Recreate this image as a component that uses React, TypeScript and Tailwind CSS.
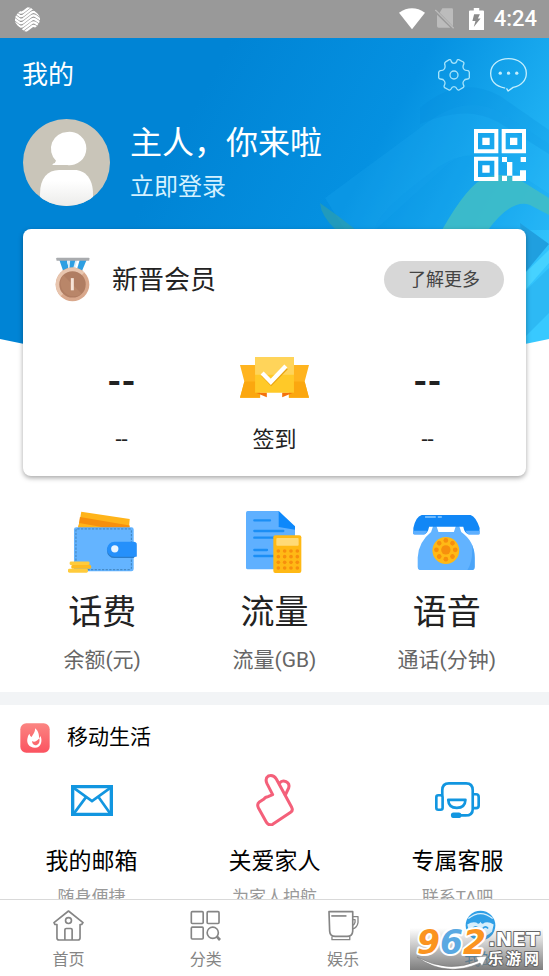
import React, { useState } from 'react';

type IconProps = { className?: string };

const waves = [-33, -22, -11, 0, 11, 22, 33];

const OperatorLogo: React.FC<IconProps> = ({ className }) => (
  <svg className={className} viewBox="0 0 78 78" fill="none" stroke="currentColor">
    <defs>
      <clipPath id="operator">
        <path d="M28 3Q39-2 50 3L70 20Q79 29 78 40Q77 52 68 60L50 75Q39 80 28 75L8 58Q-1 50 0 38Q1 26 10 18Z" />
      </clipPath>
    </defs>
    <g clipPath="url(#operator)" strokeWidth="7">
      {waves.map((dy) => (
        <path key={dy} d="M-4 32L14 45Q20 48 26 44L52 24Q58 20 64 24L82 37" transform={`translate(0 ${dy + 4})`} />
      ))}
    </g>
  </svg>
);

const WifiIcon: React.FC<IconProps> = ({ className }) => (
  <svg className={className} viewBox="0 0 78 64" fill="currentColor">
    <path d="M0 14Q39-12 78 14L39 64Z" />
  </svg>
);

const NoSimIcon: React.FC<IconProps> = ({ className }) => (
  <svg className={className} viewBox="0 0 60 64">
    <path d="M22 1H50Q54 1 54 5V55L14 14Z" fill="currentColor" />
    <path d="M6 20V54Q6 59 11 59H46Z" fill="currentColor" />
    <path d="M1 6L56 61" stroke="currentColor" strokeWidth="4" />
  </svg>
);

const BatteryIcon: React.FC<IconProps> = ({ className }) => (
  <svg className={className} viewBox="0 0 44 66">
    <path d="M14 0H30V7H41Q44 7 44 10V63Q44 66 41 66H3Q0 66 0 63V10Q0 7 3 7H14Z" fill="currentColor" />
    <path d="M15 18H32L26 31H34L14 56L19 38H10Z" fill="#8b8b8b" />
  </svg>
);

const GearIcon: React.FC<IconProps> = ({ className }) => (
  <svg className={className} viewBox="0 0 96 96" fill="none" stroke="currentColor" strokeWidth="4" strokeLinejoin="round">
    <path d="M24 8L34 2Q38 1 39 5Q41 13 48 13Q55 13 57 5Q58 1 62 2L76 9Q79 12 77 16Q73 24 77 30Q80 35 90 35Q93 36 94 40V56Q93 60 89 60Q80 60 77 66Q73 72 77 79Q79 83 75 86L63 93Q59 94 57 90Q54 83 48 83Q42 83 39 90Q37 94 33 93L20 86Q17 83 19 79Q23 72 19 66Q16 60 7 60Q3 60 2 56V40Q3 36 7 35Q16 35 19 30Q23 24 20 16Q19 11 24 8Z" />
    <circle cx="48" cy="48" r="12" />
  </svg>
);

const ChatIcon: React.FC<IconProps> = ({ className }) => (
  <svg className={className} viewBox="0 0 112 102">
    <path d="M46 91C10 84 2 62 2 46C2 18 28 2 56 2S110 18 110 46C110 66 96 84 70 89L55 100L50 92" fill="none" stroke="currentColor" strokeWidth="4" strokeLinejoin="round" />
    <circle cx="31" cy="46" r="5" fill="currentColor" />
    <circle cx="56" cy="46" r="5" fill="currentColor" />
    <circle cx="81" cy="46" r="5" fill="currentColor" />
  </svg>
);

const QrIcon: React.FC<IconProps> = ({ className }) => (
  <svg className={className} viewBox="0 0 156 156" fill="currentColor">
    <path fillRule="evenodd" d="M0 0H73V73H0ZM12 12V61H61V12Z" />
    <path fillRule="evenodd" d="M83 0H156V73H83ZM95 12V61H144V12Z" />
    <path fillRule="evenodd" d="M0 83H73V156H0ZM12 95V144H61V95Z" />
    <path d="M25 26H47V48H25ZM108 26H130V48H108ZM25 109H47V131H25Z" />
    <path d="M84 84H99V99H84ZM99 99H115V140H99ZM84 140H99V156H84ZM140 84H156V99H140ZM156 124V156H115V140H138V124Z" />
  </svg>
);

const Avatar: React.FC<IconProps> = ({ className }) => (
  <svg className={className} viewBox="0 0 261 261">
    <defs>
      <linearGradient id="bust" x1="0" y1="0" x2="0" y2="1">
        <stop offset="0.3" stopColor="#ffffff" />
        <stop offset="1" stopColor="#ececea" />
      </linearGradient>
      <clipPath id="avatar">
        <circle cx="130.500" cy="130.500" r="130.500" />
      </clipPath>
    </defs>
    <g clipPath="url(#avatar)">
      <rect width="261" height="261" fill="#c9c5b9" />
      <path d="M133 39A50 50 0 1 1 133 138H90Q86 136 90 134Q97 133 99 125A50 50 0 0 1 133 39Z" fill="#fff" />
      <path d="M51 261V224C51 178 74 153 108 153H155C187 153 210 180 210 224V261Z" fill="url(#bust)" />
    </g>
  </svg>
);

const HeroArt: React.FC<IconProps> = ({ className }) => (
  <svg className={className} viewBox="0 0 549 340" preserveAspectRatio="none">
    <defs>
      <linearGradient id="sky" gradientUnits="userSpaceOnUse" x1="210" y1="40" x2="560" y2="230">
        <stop offset="0" stopColor="#0084d5" />
        <stop offset="0.45" stopColor="#0591e1" />
        <stop offset="0.8" stopColor="#1fb1f3" />
        <stop offset="1" stopColor="#38c9ff" />
      </linearGradient>
      <clipPath id="arc">
        <path d="M0 0H549V301Q274 361 0 301Z" />
      </clipPath>
    </defs>
    <g clipPath="url(#arc)">
      <rect width="549" height="340" fill="url(#sky)" />
      <path d="M325 160L428 84Q466 56 500 74L549 106V156L510 130Q472 106 448 126L375 192H345Z" fill="#1ba6ee" opacity="0.25" />
      <path d="M420 70Q460 36 500 58L549 92V116L498 84Q466 66 420 86Z" fill="#0086d8" opacity="0.18" />
      <path d="M375 192Q376 174 440 128Q474 106 510 130L549 156V192Z" fill="#0b98e6" opacity="0.25" />
      <path d="M320 165L338 178L356 192H336Q321 178 320 165Z" fill="#2d9eac" opacity="0.7" />
      <path d="M442 192Q468 146 486 139Q504 134 520 142L549 160V177L530 167Q512 160 488 192Z" fill="#3fbcc6" opacity="0.9" />
      <path d="M520 185L549 206L524 236Z" fill="#209fdf" />
      <path d="M520 240L549 212V225L520 258Z" fill="#46d2ff" />
      <path d="M520 258L549 230V275L520 304Z" fill="#2db9f4" />
    </g>
  </svg>
);

const MedalIcon: React.FC<IconProps> = ({ className }) => (
  <svg className={className} viewBox="0 0 106 135">
    <path d="M13 8H36L44 46H26Z" fill="#2e9fe2" />
    <path d="M36 8H68L56 46H44Z" fill="#fff" />
    <path d="M36 8H68L58 40H42Z" fill="#d8eefa" />
    <path d="M46 8H62L54 38H44Z" fill="#2e9fe2" />
    <path d="M75 8H96L80 46H64Z" fill="#2e9fe2" />
    <rect x="4" y="2" width="100" height="9" rx="2" fill="#a9abae" />
    <circle cx="53" cy="83" r="51" fill="#d9a88c" />
    <path d="M17 47A51 51 0 0 0 17 119L89 47A51 51 0 0 0 17 47Z" fill="#e8c5ae" />
    <circle cx="53" cy="83" r="40" fill="#b07d62" />
    <path d="M25 55A40 40 0 0 0 81 111Z" fill="#b98669" />
    <rect x="48" y="64" width="9" height="37" fill="#f6e3d7" />
  </svg>
);

const RibbonIcon: React.FC<IconProps> = ({ className }) => (
  <svg className={className} viewBox="0 0 206 124">
    <path d="M0 24H60V122H0L13 73Z" fill="#ffb41f" />
    <path d="M13 73L0 122H60V73Z" fill="#fba70f" />
    <path d="M206 24H146V122H206L193 73Z" fill="#ffb41f" />
    <path d="M193 73L206 122H146V73Z" fill="#fba70f" />
    <path d="M46 106H80V120Z" fill="#f4720b" />
    <path d="M160 106H126V120Z" fill="#f4720b" />
    <path d="M45 0H161V107H45Z" fill="#ffc928" />
    <path d="M45 0H161V53H45Z" fill="#ffd45a" />
    <path d="M68 52L93 78L138 32" fill="none" stroke="#e9a512" strokeWidth="13" />
    <path d="M66 48L92 74L137 27" fill="none" stroke="#fff" strokeWidth="13" />
  </svg>
);

const WalletIcon: React.FC<IconProps> = ({ className }) => (
  <svg className={className} viewBox="0 0 208 188">
    <path d="M40 2L186 24L183 60H30Z" fill="#ffb41a" />
    <path d="M36 18L186 44V60H30Z" fill="#f78f0d" />
    <path d="M34 36L110 50H30Z" fill="#ffb41a" />
    <rect x="18" y="49" width="180" height="133" rx="7" fill="#64b4ff" />
    <rect x="24" y="54" width="167" height="123" rx="4" fill="none" stroke="#3577ac" strokeWidth="2.500" strokeDasharray="7 4" />
    <path d="M140 97H206V136H204L198 142H140A22 22 0 0 1 140 97Z" fill="#2b7cc9" />
    <path d="M140 93H198Q207 93 207 101V138H140A22 22 0 0 1 140 93Z" fill="#2590fb" />
    <circle cx="141" cy="114" r="11" fill="#eaf5ff" />
    <rect x="5" y="152" width="60" height="11" rx="4" fill="#ffcb3c" />
    <rect x="10" y="163" width="60" height="11" rx="4" fill="#fdbb21" />
    <rect x="0" y="174" width="60" height="12" rx="4" fill="#ffcb3c" />
  </svg>
);

const keys = [0, 1, 2, 3];

const DataIcon: React.FC<IconProps> = ({ className }) => (
  <svg className={className} viewBox="0 0 168 188">
    <path d="M5 0H98L147 50V175H5Q0 175 0 170V5Q0 0 5 0Z" fill="#5fb0ff" />
    <path d="M98 0L147 46V56L98 48Z" fill="#0d88fb" />
    <path d="M25 28H72M25 60H112M25 80H84M25 117H63M25 135H84" stroke="#1b8ef5" strokeWidth="7" strokeLinecap="round" />
    <rect x="82" y="73" width="84" height="113" rx="6" fill="#ffb915" />
    <rect x="91" y="81" width="67" height="23" rx="3" fill="#ffda76" />
    {keys.map((row) =>
      keys.map((col) => (
        <circle key={`${row}-${col}`} cx={97 + col * 19} cy={120 + row * 17} r="5.500" fill="#f78f0d" />
      ))
    )}
  </svg>
);

const dialHoles = [0, 45, 90, 135, 180, 225, 270, 315];

const PhoneIcon: React.FC<IconProps> = ({ className }) => (
  <svg className={className} viewBox="0 0 200 170">
    <path d="M54 54L60 36H70L76 54H122L128 36H138L144 54Q184 82 184 130V158Q184 168 174 168H24Q14 168 14 158V130Q16 84 54 54Z" fill="#62b3ff" />
    <path d="M176 92Q184 108 184 130V158Q184 168 174 168H162Q180 140 176 92Z" fill="#4ba4f8" />
    <path d="M26 3H172Q188 8 199 42L198 60H168Q154 60 150 38H48Q44 60 32 60H1V42Q8 8 26 3Z" fill="#1187f6" />
    <path d="M1 50H42Q38 62 32 62H5Q1 62 1 58ZM199 50H157Q162 62 168 62H195Q199 62 199 58Z" fill="#5dafff" />
    <path d="M36 9H68M74 9H86" stroke="#8fcbff" strokeWidth="4" />
    <circle cx="98" cy="109" r="40" fill="#ffb915" />
    <circle cx="98" cy="107" r="14" fill="#f78f0d" />
    {dialHoles.map((angle) => (
      <circle key={angle} cx="98" cy="79" r="7" fill="#f78f0d" transform={`rotate(${angle} 98 107)`} />
    ))}
  </svg>
);

const HotIcon: React.FC<IconProps> = ({ className }) => (
  <svg className={className} viewBox="0 0 90 90">
    <defs>
      <linearGradient id="hot" x1="0" y1="0" x2="0" y2="1">
        <stop offset="0" stopColor="#fb8582" />
        <stop offset="1" stopColor="#fb5360" />
      </linearGradient>
    </defs>
    <rect x="1" y="1" width="88" height="88" rx="18" fill="url(#hot)" />
    <path d="M45 16C58 26 56 38 58 46Q61 42 61 38C68 50 65 74 45 74C26 74 20 60 22 48Q23 38 28 32Q30 40 35 42C40 32 46 28 45 16Z" fill="#fff" />
    <path d="M36 54C42 59 50 56 58 46C61 60 54 67 46 67Q37 65 36 54Z" fill="#fb6a6f" />
  </svg>
);

const MailIcon: React.FC<IconProps> = ({ className }) => (
  <svg className={className} viewBox="0 0 126 93" fill="none" stroke="currentColor">
    <path d="M5 5H121V88H5Z" strokeWidth="10" />
    <path d="M6 7L63 48L120 7M44 38L9 85M84 38L117 85" strokeWidth="8" />
  </svg>
);

const CareIcon: React.FC<IconProps> = ({ className }) => (
  <svg className={className} viewBox="0 0 114 158" fill="none" stroke="currentColor" strokeWidth="9" strokeLinejoin="round" strokeLinecap="round">
    <path d="M24 75Q28 68 36 68L50 62L33 29Q26 13 37 6Q52 1 61 15L107 100Q112 110 104 115L50 151Q39 156 32 146L7 101Q2 90 10 84Z" />
    <path d="M71 27Q78 18 90 23Q102 29 98 42L88 63" />
  </svg>
);

const ServiceIcon: React.FC<IconProps> = ({ className }) => (
  <svg className={className} viewBox="0 0 136 108" fill="none" stroke="currentColor" strokeWidth="8" strokeLinejoin="round">
    <path d="M22 41V25Q22 4 42 4H94Q114 4 114 25V82Q114 101 92 101H76" />
    <rect x="4" y="40" width="19" height="44" rx="6" />
    <path d="M114 37H124Q132 37 132 45V72Q132 79 124 79H114" />
    <path d="M40 54H92Q91 78 66 78Q41 78 40 54Z" />
    <rect x="52" y="96" width="24" height="9" rx="4" fill="currentColor" />
  </svg>
);

const HomeIcon: React.FC<IconProps> = ({ className }) => (
  <svg className={className} viewBox="0 0 94 94" fill="none" stroke="currentColor" strokeWidth="5" strokeLinejoin="round">
    <path d="M47 3L91 38L87 44H82V85Q82 91 76 91H18Q12 91 12 85V44H6L3 38Z" />
    <circle cx="47" cy="32" r="9" />
    <path d="M36 91V60Q36 56 40 56H54Q58 56 58 60V91" />
  </svg>
);

const CategoryIcon: React.FC<IconProps> = ({ className }) => (
  <svg className={className} viewBox="0 0 94 94" fill="none" stroke="currentColor" strokeWidth="5">
    <rect x="4" y="5" width="36" height="36" rx="3" />
    <rect x="52" y="5" width="36" height="36" rx="3" />
    <rect x="4" y="52" width="36" height="36" rx="3" />
    <circle cx="69" cy="69" r="17" />
    <path d="M81 80L91 91" strokeWidth="8" />
  </svg>
);

const CupIcon: React.FC<IconProps> = ({ className }) => (
  <svg className={className} viewBox="0 0 94 94" fill="none" stroke="currentColor" strokeWidth="5" strokeLinejoin="round">
    <path d="M3 5H75V64Q74 80 58 80H22Q6 80 5 64Z" />
    <path d="M10 18H56" />
    <path d="M74 20H91V38Q88 54 75 57M75 29H82V37Q80 44 75 46" strokeWidth="4" />
    <path d="M12 80V90H66V80" strokeWidth="4" />
  </svg>
);

const MineIcon: React.FC<IconProps> = ({ className }) => (
  <svg className={className} viewBox="0 0 94 94" fill="none">
    <circle cx="47" cy="47" r="45" fill="#2f9fe6" />
    <path d="M10 26Q47-4 84 26" stroke="#d8effc" strokeWidth="4" />
    <path d="M7 44Q22 34 34 38Q44 46 47 36Q50 46 60 38Q72 34 87 44L82 66Q64 82 47 82T12 66Z" fill="#d8effc" />
    <path d="M24 56Q32 46 40 56M54 56Q62 46 70 56M34 70Q47 76 60 70" stroke="#2f9fe6" strokeWidth="5" />
  </svg>
);

const SiteBadge: React.FC<IconProps> = ({ className }) => (
  <svg className={className} viewBox="0 0 134 46" role="img" aria-label="962.NET 乐游网">
    <defs>
      <linearGradient id="plate" x1="0" y1="0" x2="0" y2="1">
        <stop offset="0" stopColor="#777" stopOpacity="0" />
        <stop offset="1" stopColor="#777" stopOpacity="0.95" />
      </linearGradient>
    </defs>
    <rect y="4" width="133" height="42" fill="url(#plate)" />
    <path d="M7 33Q38 50 68 37L66 33L77 32L72 42L70 39Q36 54 7 33Z" fill="#fff" stroke="#777" strokeWidth="0.500" />
    <g fontFamily="'DejaVu Sans', sans-serif" fontWeight="700" strokeLinejoin="round" paintOrder="stroke">
      <g stroke="#fff" strokeWidth="4" fontSize="33" fontStyle="italic">
        <text x="7" y="30" fill="#fb9420">9</text>
        <text x="30" y="30" fill="#5aa9e2">6</text>
        <text x="53" y="30" fill="#fb9420">2</text>
      </g>
      <text x="78" y="22" fontSize="20" fill="#fff" stroke="#666" strokeWidth="2">.NET</text>
    </g>
    <g fill="#fff" stroke="#666" strokeWidth="2" strokeLinejoin="round" fontWeight="700" paintOrder="stroke" fontSize="15" fontFamily="'Noto Sans CJK SC', sans-serif">
      <text x="78" y="40">乐</text>
      <text x="96" y="40">游</text>
      <text x="114" y="40">网</text>
    </g>
  </svg>
);

const USAGE = [
  { title: '话费', note: '余额(元)', icon: <WalletIcon className="w-[69px]" /> },
  { title: '流量', note: '流量(GB)', icon: <DataIcon className="w-[56px]" /> },
  { title: '语音', note: '通话(分钟)', icon: <PhoneIcon className="w-[67px]" /> },
];

const SERVICES = [
  { title: '我的邮箱', note: '随身便捷', icon: <MailIcon className="w-[42px] text-[#1296e0]" /> },
  { title: '关爱家人', note: '为家人护航', icon: <CareIcon className="w-[38px] text-[#f4607a]" /> },
  { title: '专属客服', note: '联系TA吧', icon: <ServiceIcon className="w-[45px] text-[#1296e0]" /> },
];

const TABS = [
  { label: '首页', icon: <HomeIcon className="size-[31px]" /> },
  { label: '分类', icon: <CategoryIcon className="size-[31px]" /> },
  { label: '娱乐', icon: <CupIcon className="size-[31px]" /> },
  { label: '我的', icon: <MineIcon className="size-[31px]" /> },
];

const StatusBar: React.FC = () => (
  <div className="flex h-[38px] shrink-0 items-center bg-[#999999] pr-3 pl-[15px] text-white">
    <OperatorLogo className="size-[25px]" />
    <div className="ml-auto flex items-center">
      <WifiIcon className="w-[26px]" />
      <NoSimIcon className="ml-[10px] w-5 text-[#bcbcbc]" />
      <BatteryIcon className="ml-[14px] w-[15px]" />
      <span className="ml-[10px] font-[Roboto] text-[22px] leading-6 font-medium">4:24</span>
    </div>
  </div>
);

const MemberCard: React.FC = () => (
  <section className="mx-[23px] mt-[23px] rounded-lg bg-white px-[22px] pt-7 pb-5 text-[#222] shadow-[0_2px_5px_rgba(0,0,0,0.35)]">
    <div className="flex h-[45px] items-center">
      <MedalIcon className="ml-[10px] w-[35px]" />
      <h2 className="ml-[22px] text-[26px] leading-8">新晋会员</h2>
      <button className="ml-auto h-[37px] w-[120px] rounded-full bg-[#d7d7d7] text-[18px] text-[#444]">了解更多</button>
    </div>
    <div className="mt-[50px] grid grid-cols-3 text-center text-[22px]">
      <div>
        <div className="flex h-[60px] items-center justify-center text-[36px] font-bold">--</div>
        <p className="mt-3 leading-8">--</p>
      </div>
      <button>
        <span className="flex h-[60px] items-center justify-center pb-2">
          <RibbonIcon className="w-[69px]" />
        </span>
        <span className="mt-3 block leading-8">签到</span>
      </button>
      <div>
        <div className="flex h-[60px] items-center justify-center text-[36px] font-bold">--</div>
        <p className="mt-3 leading-8">--</p>
      </div>
    </div>
  </section>
);

const App: React.FC = () => {
  const [activeTab, setActiveTab] = useState('我的');

  return (
    <div className="flex h-screen flex-col overflow-hidden bg-white font-[Roboto,'Noto_Sans_CJK_SC',sans-serif]" lang="zh-CN">
      <StatusBar />

      <main className="min-h-0 flex-1 overflow-hidden">
        <div className="relative isolate">
          <HeroArt className="absolute inset-x-0 top-0 -z-10 h-[340px] w-full" />

          <header className="flex h-[74px] items-center px-[22px] text-white">
            <h1 className="text-[26px]">我的</h1>
            <button className="ml-auto text-[#a5e3fb]" aria-label="设置">
              <GearIcon className="size-8" />
            </button>
            <button className="ml-5 text-[#c4eefd]" aria-label="消息">
              <ChatIcon className="w-[37px]" />
            </button>
          </header>

          <div className="mt-[7px] flex h-[87px] items-center px-[23px] text-white">
            <Avatar className="size-[87px]" />
            <div className="ml-5 pt-1">
              <p className="text-[32px] leading-[44px]">主人，你来啦</p>
              <a href="#login" className="block text-[24px] leading-[44px] text-[#d3f1ff]">立即登录</a>
            </div>
            <button className="mb-4 ml-auto" aria-label="二维码">
              <QrIcon className="size-[52px]" />
            </button>
          </div>

          <MemberCard />
        </div>

        <section className="mt-[34px] grid grid-cols-3 px-4 pb-[17px] text-center">
          {USAGE.map((item) => (
            <div key={item.title}>
              <div className="flex h-16 items-center justify-center">{item.icon}</div>
              <h3 className="mt-4 text-[34px] leading-[44px] text-[#222]">{item.title}</h3>
              <p className="mt-[11px] text-[21px] leading-[30px] text-[#666]">{item.note}</p>
            </div>
          ))}
        </section>

        <section className="border-t-[13px] border-[#f2f4f6] pt-[18px] text-black">
          <div className="flex h-[30px] items-center pl-5">
            <HotIcon className="size-[30px]" />
            <h2 className="ml-[17px] text-[21px]">移动生活</h2>
          </div>
          <div className="mt-[21px] grid grid-cols-3 text-center">
            {SERVICES.map((item) => (
              <a key={item.title} href="#service">
                <span className="flex h-[52px] items-center justify-center">{item.icon}</span>
                <span className="mt-5 block text-[23px] leading-8">{item.title}</span>
                <span className="mt-[7px] block text-[17px] leading-6 text-[#999]">{item.note}</span>
              </a>
            ))}
          </div>
        </section>
      </main>

      <nav className="relative grid shrink-0 grid-cols-4 border-t border-[#d9d9d9] bg-white pt-[10px] pb-1">
        {TABS.map((tab) => (
          <button
            key={tab.label}
            onClick={() => setActiveTab(tab.label)}
            className={activeTab === tab.label ? 'flex flex-col items-center text-[#1a8fd6]' : 'flex flex-col items-center text-[#858585]'}
          >
            {tab.icon}
            <span className="mt-[7px] text-[16px] leading-6">{tab.label}</span>
          </button>
        ))}
        <SiteBadge className="pointer-events-none absolute right-[5px] bottom-[6px] w-[134px]" />
      </nav>
    </div>
  );
};

export default App;
